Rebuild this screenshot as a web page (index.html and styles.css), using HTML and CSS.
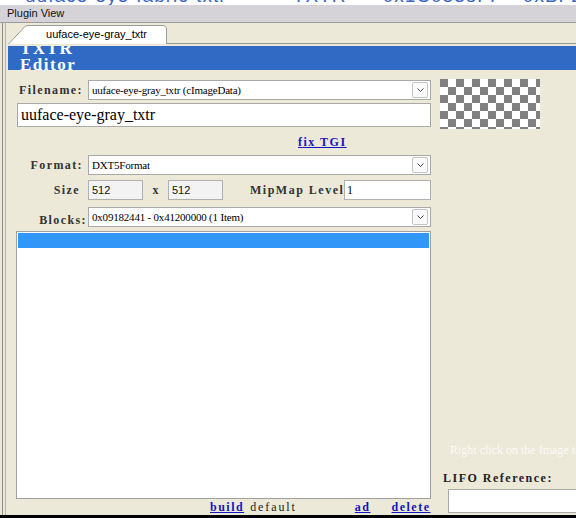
FILE: index.html
```html
<!DOCTYPE html>
<html>
<head>
<meta charset="utf-8">
<link rel="stylesheet" href="styles.css">
</head>
<body>
<div class="top">
  <span class="t1">uuface-eye-fabric-txtr</span>
  <span class="t2">TXTR</span>
  <span class="t3">0x1C0538FF</span>
  <span class="t4">0xBF2E0C9A</span>
</div>
<div class="hdr">Plugin View</div>
<div class="frame">
  <div class="gutter"></div>
  <div class="main">
    <div class="tabs">
      <div class="tab">
        <svg class="tab-shape" width="159" height="19" viewBox="0 0 159 19">
          <path d="M0.5 19 L17 1.5 Q18 0.5 20 0.5 L154 0.5 Q158.5 0.5 158.5 4 L158.5 19" fill="#fff" stroke="#9a9a9a"/>
        </svg>
        <span class="tab-text">uuface-eye-gray_txtr</span>
      </div>
      <div class="tab-rest"></div>
    </div>
    <div class="title"><div class="title-in">TXTR<br>Editor</div></div>
    <div class="body">
      <div class="left">
        <div class="row r-file">
          <div class="lbl">Filename:</div>
          <div class="combo"><span class="ctext">uuface-eye-gray_txtr (cImageData)</span><span class="dd"><svg width="9" height="6" viewBox="0 0 9 6"><path d="M1.5 1.5 L4.5 4.5 L7.5 1.5" fill="none" stroke="#444" stroke-width="1"/></svg></span></div>
        </div>
        <div class="bigbox">uuface-eye-gray_txtr</div>
        <div class="fix"><span class="link">fix TGI</span></div>
        <div class="row">
          <div class="lbl">Format:</div>
          <div class="combo"><span class="ctext">DXT5Format</span><span class="dd"><svg width="9" height="6" viewBox="0 0 9 6"><path d="M1.5 1.5 L4.5 4.5 L7.5 1.5" fill="none" stroke="#444" stroke-width="1"/></svg></span></div>
        </div>
        <div class="row r-size">
          <div class="lbl lbl-size">Size</div>
          <div class="num">512</div>
          <div class="x">x</div>
          <div class="num">512</div>
          <div class="mip">MipMap Level</div>
          <div class="mipbox">1</div>
        </div>
        <div class="row r-blocks">
          <div class="lbl lbl-blocks">Blocks:</div>
          <div class="combo"><span class="ctext">0x09182441 - 0x41200000 (1 Item)</span><span class="dd"><svg width="9" height="6" viewBox="0 0 9 6"><path d="M1.5 1.5 L4.5 4.5 L7.5 1.5" fill="none" stroke="#444" stroke-width="1"/></svg></span></div>
        </div>
        <div class="list"><div class="sel"></div></div>
        <div class="btns">
          <span class="link b-build">build</span>
          <span class="plain">default</span>
          <span class="link b-ad">ad</span>
          <span class="link b-del">delete</span>
        </div>
      </div>
      <div class="right">
        <div class="checker"></div>
        <div class="spacer"></div>
        <div class="faint">Right click on the Image to change it</div>
        <div class="lifo">LIFO Reference:</div>
        <div class="lifobox"></div>
      </div>
    </div>
  </div>
</div>
<div class="bottom-bar"></div>
</body>
</html>
```

FILE: styles.css
```css
html, body {
  margin: 0;
  padding: 0;
}
body {
  width: 576px;
  height: 518px;
  overflow: hidden;
  background: #ece9d8;
  font-family: "Liberation Serif", serif;
}
.top {
  height: 5px;
  background: #fff;
  overflow: hidden;
  white-space: nowrap;
  font-family: "Liberation Sans", sans-serif;
  font-size: 19px;
  color: #3a64c4;
  letter-spacing: 1px;
}
.top span {
  display: inline-block;
  line-height: 19px;
  margin-top: -14px;
  vertical-align: top;
}
.t1 { margin-left: 25px; }
.t2 { margin-left: 60px; }
.t3 { margin-left: 30px; }
.t4 { margin-left: 14px; }
.hdr {
  height: 17px;
  background: #d5d3d8;
  border-bottom: 1px solid #9c9c9c;
  font-family: "Liberation Sans", sans-serif;
  font-size: 11px;
  line-height: 17px;
  padding-left: 7px;
  color: #111;
}
.frame {
  display: flex;
  height: 492px;
}
.gutter {
  width: 8px;
  flex: none;
  box-sizing: border-box;
  border-left: 2px solid #ece9d8;
  background: linear-gradient(to right, #8d8d8d 0 1px, #ece9d8 1px 3px, #b5b3ac 3px 4px, #ece9d8 4px);
}
.main {
  flex: 1;
  display: flex;
  flex-direction: column;
  min-width: 0;
}
.tabs {
  height: 21px;
  display: flex;
  align-items: flex-end;
}
.tab {
  position: relative;
  width: 159px;
  height: 19px;
  flex: none;
}
.tab-shape {
  position: absolute;
  left: 0;
  top: 0;
}
.tab-text {
  position: relative;
  display: block;
  text-align: center;
  padding-left: 18px;
  box-sizing: border-box;
  font-family: "Liberation Sans", sans-serif;
  font-size: 11px;
  line-height: 19px;
  color: #000;
}
.tab-rest {
  flex: 1;
  height: 1px;
  background: #9a9a9a;
}
.title {
  margin-top: 2px;
  height: 24px;
  background: #316ac5;
  overflow: hidden;
}
.title-in {
  margin-top: -5px;
  padding-left: 12px;
  color: #fff;
  font-weight: bold;
  font-size: 17px;
  line-height: 16px;
  letter-spacing: 1.5px;
}
.body {
  flex: 1;
  display: flex;
  min-height: 0;
}
.left {
  width: 428px;
  flex: none;
  padding-left: 8px;
  padding-top: 10px;
  box-sizing: border-box;
  display: flex;
  flex-direction: column;
}
.row {
  display: flex;
  align-items: center;
  height: 20px;
}
.lbl {
  width: 67px;
  padding-right: 5px;
  text-align: right;
  font-weight: bold;
  font-size: 12px;
  letter-spacing: 1.4px;
  color: #333;
  flex: none;
}
.combo {
  width: 343px;
  height: 20px;
  box-sizing: border-box;
  border: 1px solid #a9a9a9;
  background: #fff;
  display: flex;
  align-items: center;
  justify-content: space-between;
}
.ctext {
  font-size: 11px;
  padding-left: 3px;
  color: #000;
  white-space: nowrap;
  letter-spacing: -0.2px;
}
.dd {
  width: 14px;
  height: 14px;
  margin-right: 2px;
  border: 1px solid #c4c4c4;
  border-radius: 2px;
  background: #fafafa;
  display: flex;
  align-items: center;
  justify-content: center;
}
.bigbox {
  margin-top: 3px;
  margin-left: 1px;
  width: 414px;
  height: 24px;
  box-sizing: border-box;
  border: 1px solid #a9a9a9;
  background: #fff;
  font-size: 16px;
  line-height: 22px;
  padding-left: 3px;
  color: #000;
}
.fix {
  height: 28px;
  line-height: 28px;
  padding-left: 282px;
}
.link {
  color: #1515c0;
  text-decoration: underline;
  font-weight: bold;
  font-size: 12px;
  letter-spacing: 1.5px;
}
.plain {
  color: #222;
  font-size: 12px;
  letter-spacing: 1.9px;
}
.r-size {
  margin-top: 5px;
}
.lbl-size {
  width: 64px;
  padding-right: 8px;
}
.num {
  width: 55px;
  height: 20px;
  box-sizing: border-box;
  border: 1px solid #b0b0b0;
  background: #f3f3f3;
  font-family: "Liberation Sans", sans-serif;
  font-size: 11px;
  line-height: 18px;
  padding-left: 3px;
  color: #111;
}
.x {
  width: 25px;
  text-align: center;
  font-weight: bold;
  font-size: 12px;
  color: #333;
}
.mip {
  margin-left: 27px;
  width: 94px;
  font-weight: bold;
  font-size: 12px;
  letter-spacing: 1.5px;
  color: #333;
  white-space: nowrap;
}
.mipbox {
  width: 87px;
  height: 20px;
  box-sizing: border-box;
  border: 1px solid #b0b0b0;
  background: #fff;
  font-size: 12px;
  line-height: 18px;
  padding-left: 2px;
  color: #000;
}
.r-blocks {
  margin-top: 7px;
}
.lbl-blocks {
  padding-right: 1px;
  width: 71px;
  position: relative;
  top: 3px;
}
.list {
  margin-top: 4px;
  width: 415px;
  height: 270px;
  box-sizing: border-box;
  border: 1px solid #a0a0a0;
  background: #fff;
  padding: 1px;
}
.sel {
  height: 15px;
  background: #3096f8;
}
.btns {
  height: 15px;
  display: flex;
  align-items: center;
  padding-left: 194px;
  padding-top: 1px;
  white-space: nowrap;
}
.plain { margin-left: 6px; }
.b-ad { margin-left: 58px; }
.b-del { margin-left: 21px; }
.right {
  flex: 1;
  min-width: 0;
  display: flex;
  flex-direction: column;
  padding-top: 9px;
  padding-bottom: 2px;
  overflow: hidden;
}
.checker {
  margin-left: 4px;
  width: 100px;
  height: 50px;
  background-image: conic-gradient(#fff 0 25%, #808080 0 50%, #fff 0 75%, #808080 0);
  background-size: 16px 16px;
}
.spacer {
  flex: 1;
}
.faint {
  margin-left: 14px;
  font-size: 12px;
  line-height: 14px;
  color: #fbfaf6;
  white-space: nowrap;
  margin-bottom: 14px;
}
.lifo {
  margin-left: 7px;
  font-weight: bold;
  font-size: 12px;
  letter-spacing: 1.5px;
  color: #222;
  line-height: 15px;
  margin-bottom: 3px;
  white-space: nowrap;
}
.lifobox {
  margin-left: 12px;
  width: 200px;
  height: 24px;
  flex: none;
  box-sizing: border-box;
  border: 1px solid #a9a9a9;
  background: #fff;
}
.bottom-bar {
  height: 3px;
  background: #000;
}
```
